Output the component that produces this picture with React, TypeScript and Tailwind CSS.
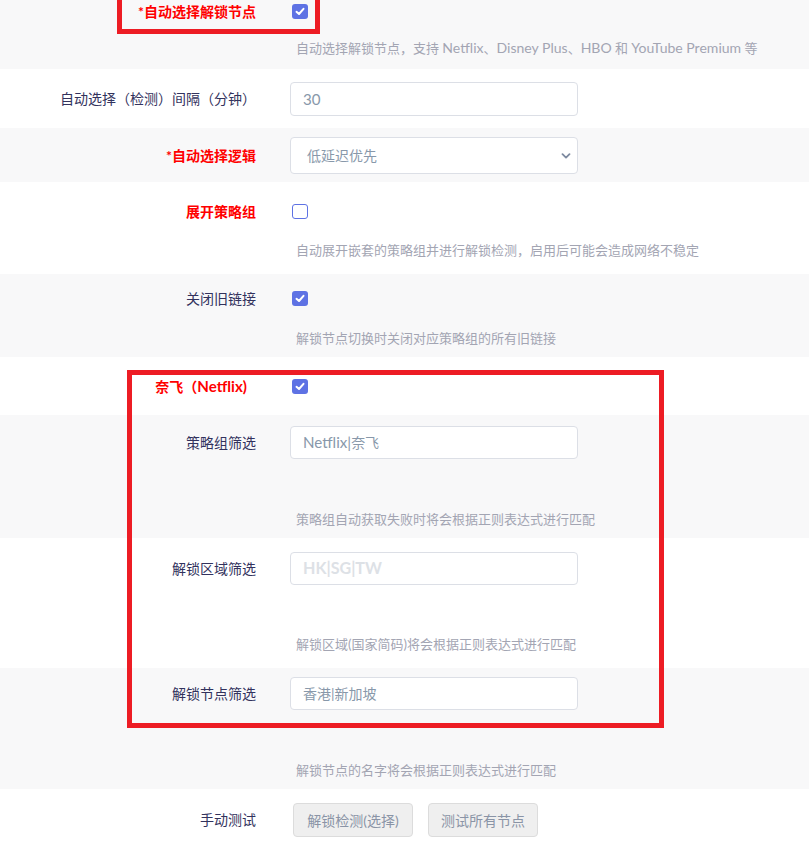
import type { ReactNode } from 'react'

const font = { fontFamily: 'Lato, "Noto Sans CJK SC", sans-serif' }

// latin runs render a touch wider in the original
function L({ children }: { children: ReactNode }) {
  return <span className="text-[1.08em]">{children}</span>
}

function Row({
  gray,
  label,
  red,
  h,
  pt,
  ctrlH,
  labelPr,
  children,
  desc,
  descMt,
}: {
  gray?: boolean
  label: ReactNode
  red?: boolean
  h: number
  pt: number
  ctrlH: number
  labelPr?: string
  children: ReactNode
  desc?: ReactNode
  descMt?: number
}) {
  return (
    <div
      className={`flex shrink-0 ${gray ? 'bg-[#f8f8f9]' : 'bg-white'}`}
      style={{ height: h, paddingTop: pt }}
    >
      <div
        className={`w-[256px] shrink-0 flex items-center justify-end text-[14px] leading-none whitespace-nowrap ${
          red ? 'text-[#ff0000] font-bold' : 'text-[#32325d]'
        } ${labelPr ?? ''}`}
        style={{ height: ctrlH }}
      >
        {label}
      </div>
      <div className="ml-[34px] flex flex-col">
        <div className="flex items-center" style={{ height: ctrlH }}>
          {children}
        </div>
        {desc && (
          <div
            className="pl-[6px] text-[13px] leading-[20px] text-[#a3a5b3] whitespace-nowrap"
            style={{ marginTop: descMt }}
          >
            {desc}
          </div>
        )}
      </div>
    </div>
  )
}

function Check({ on }: { on: boolean }) {
  return (
    <div
      className={`ml-[2px] w-[16px] h-[15px] rounded-[3px] flex items-center justify-center ${
        on ? 'bg-[#5e72e4]' : 'bg-white border border-[#5e72e4]'
      }`}
    >
      {on && (
        <svg width="10" height="9" viewBox="0 0 10 9" fill="none">
          <path d="M1.5 4.8 L4 7 L8.5 1.8" stroke="white" strokeWidth="2" strokeLinecap="round" strokeLinejoin="round" />
        </svg>
      )}
    </div>
  )
}

function Field({ value, placeholder }: { value?: ReactNode; placeholder?: ReactNode }) {
  return (
    <div className="w-[288px] h-full rounded-[4px] border border-[#dcdfe6] bg-white flex items-center pl-[12px] text-[14px] whitespace-nowrap">
      {value ? (
        <span className="text-[#8898aa]">{value}</span>
      ) : (
        <span className="text-[#dde1e6] font-bold">{placeholder}</span>
      )}
    </div>
  )
}

export default function App() {
  return (
    <div className="relative w-[809px] h-[846px] overflow-hidden bg-white flex flex-col" style={font}>
      <Row
        gray
        red
        label="*自动选择解锁节点"
        h={69}
        pt={4}
        ctrlH={15}
        desc={
          <>
            自动选择解锁节点，支持 <L>Netflix</L>、<L>Disney Plus</L>、<L>HBO</L> 和 <L>YouTube Premium</L> 等
          </>
        }
        descMt={19}
      >
        <Check on />
      </Row>
      <Row label="自动选择（检测）间隔（分钟）" h={59} pt={13} ctrlH={34}>
        <Field value={<L>30</L>} />
      </Row>
      <Row gray red label="*自动选择逻辑" h={54} pt={9} ctrlH={37}>
        <div className="w-[288px] h-full rounded-[4px] border border-[#dcdfe6] bg-white flex items-center justify-between pl-[16px] pr-[6px] text-[14px] text-[#8898aa]">
          <span>低延迟优先</span>
          <svg width="10" height="6" viewBox="0 0 10 6" fill="none">
            <path d="M1.5 1.2 L5 4.6 L8.5 1.2" stroke="#7d8aa0" strokeWidth="1.8" strokeLinecap="round" strokeLinejoin="round" />
          </svg>
        </div>
      </Row>
      <Row
        red
        label="展开策略组"
        h={92}
        pt={22}
        ctrlH={15}
        desc="自动展开嵌套的策略组并进行解锁检测，启用后可能会造成网络不稳定"
        descMt={21}
      >
        <Check on={false} />
      </Row>
      <Row
        gray
        label="关闭旧链接"
        h={83}
        pt={17}
        ctrlH={15}
        desc="解锁节点切换时关闭对应策略组的所有旧链接"
        descMt={22}
      >
        <Check on />
      </Row>
      <Row
        red
        label={
          <>
            奈飞（<L>Netflix)</L>
          </>
        }
        h={58}
        pt={22}
        ctrlH={15}
        labelPr="pr-[9px]"
      >
        <Check on />
      </Row>
      <Row
        gray
        label="策略组筛选"
        h={123}
        pt={11}
        ctrlH={33}
        desc="策略组自动获取失败时将会根据正则表达式进行匹配"
        descMt={50}
      >
        <Field
          value={
            <>
              <L>Netflix|</L>奈飞
            </>
          }
        />
      </Row>
      <Row
        label="解锁区域筛选"
        h={130}
        pt={14}
        ctrlH={33}
        desc="解锁区域(国家简码)将会根据正则表达式进行匹配"
        descMt={49}
      >
        <Field placeholder={<span className="text-[1.15em]">HK|SG|TW</span>} />
      </Row>
      <Row
        gray
        label="解锁节点筛选"
        h={121}
        pt={9}
        ctrlH={33}
        desc="解锁节点的名字将会根据正则表达式进行匹配"
        descMt={50}
      >
        <Field value="香港|新加坡" />
      </Row>
      <Row label="手动测试" h={57} pt={14} ctrlH={34}>
        <div className="ml-[3px] flex gap-[15px]">
          <button className="h-[34px] w-[120px] rounded-[4px] border border-[#dcdcdc] bg-[#efefef] text-[14px] text-[#8a94a6]">
            解锁检测(选择)
          </button>
          <button className="h-[34px] w-[110px] rounded-[4px] border border-[#dcdcdc] bg-[#efefef] text-[14px] text-[#8a94a6]">
            测试所有节点
          </button>
        </div>
      </Row>

      {/* annotation boxes */}
      <div className="absolute left-[117px] top-[-10px] w-[203px] h-[44px] border-[5px] border-[#ed1c24]" />
      <div className="absolute left-[127px] top-[370px] w-[537px] h-[358px] border-[5px] border-[#ed1c24]" />
    </div>
  )
}
